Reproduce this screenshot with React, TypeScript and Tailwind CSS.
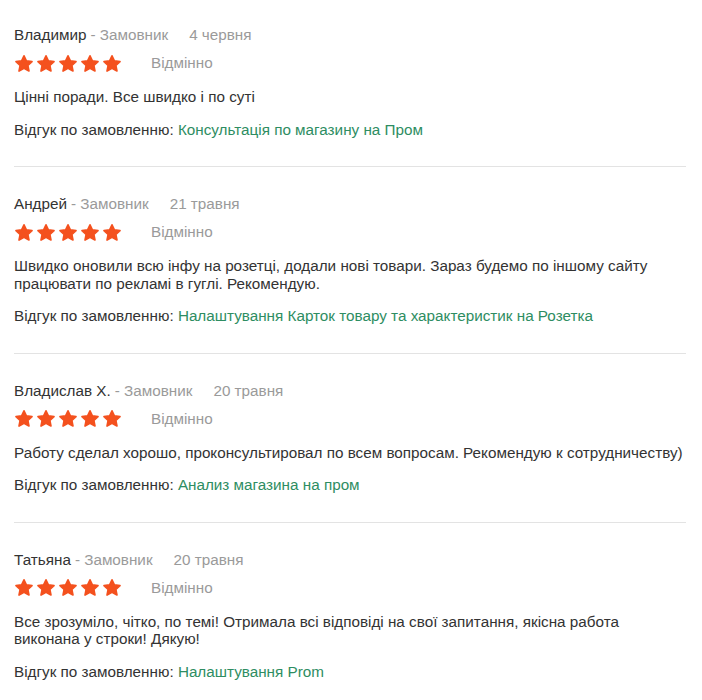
import React from "react";

const reviews = [
  {
    name: "Владимир",
    date: "4 червня",
    text: "Цінні поради. Все швидко і по суті",
    order: "Консультація по магазину на Пром",
  },
  {
    name: "Андрей",
    date: "21 травня",
    text: "Швидко оновили всю інфу на розетці, додали нові товари. Зараз будемо по іншому сайту працювати по рекламі в гуглі. Рекомендую.",
    order: "Налаштування Карток товару та характеристик на Розетка",
  },
  {
    name: "Владислав Х.",
    date: "20 травня",
    text: "Работу сделал хорошо, проконсультировал по всем вопросам. Рекомендую к сотрудничеству)",
    order: "Анализ магазина на пром",
  },
  {
    name: "Татьяна",
    date: "20 травня",
    text: "Все зрозуміло, чітко, по темі! Отримала всі відповіді на свої запитання, якісна работа виконана у строки! Дякую!",
    order: "Налаштування Prom",
  },
];

function Star() {
  return (
    <svg width="20" height="19" viewBox="0 0 24 23" className="shrink-0">
      <path
        d="M12 2.2l2.9 6.2 6.8.8-5 4.7 1.3 6.7L12 17.3l-6 3.3 1.3-6.7-5-4.7 6.8-.8z"
        fill="#f4511e"
        stroke="#f4511e"
        strokeWidth="2"
        strokeLinejoin="round"
      />
    </svg>
  );
}

export default function App() {
  return (
    <div
      className="bg-white pl-[14px] pr-4 pt-[25px] text-[15.25px] text-[#333]"
      style={{ fontFamily: '"Liberation Sans", Arial, sans-serif' }}
    >
      {reviews.map((r, i) => (
        <div
          key={i}
          className={`${i > 0 ? "pt-[27px]" : ""} ${
            i < reviews.length - 1 ? "pb-[28px] border-b border-[#e3e3e3]" : "pb-6"
          }`}
        >
          {/* Header */}
          <div className="flex items-center h-5 leading-5">
            <span className="text-[#333]">{r.name}</span>
            <span className="text-[#9a9a9a] ml-1">- Замовник</span>
            <span className="text-[#9a9a9a] ml-[21px]">{r.date}</span>
          </div>

          {/* Rating */}
          <div className="flex items-center h-5 mt-2">
            <div className="flex gap-[2px]">
              <Star />
              <Star />
              <Star />
              <Star />
              <Star />
            </div>
            <span className="ml-[29px] text-[#9a9a9a] leading-5">Відмінно</span>
          </div>

          <p className="mt-[15px] leading-[17.5px]">{r.text}</p>

          <p className="mt-[15px] leading-[17.5px]">
            Відгук по замовленню:{" "}
            <a href="#" className="text-[#2e8d62]">
              {r.order}
            </a>
          </p>
        </div>
      ))}
    </div>
  );
}
